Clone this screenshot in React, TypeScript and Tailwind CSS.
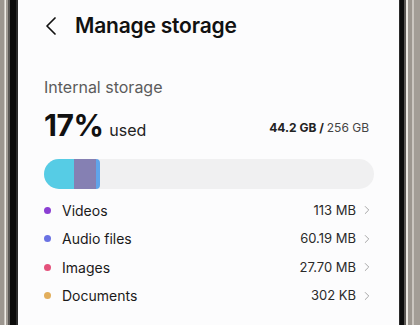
import { ChevronLeft, ChevronRight } from "lucide-react";

type Item = {
  label: string;
  size: string;
  dot: string;
};

const items: Item[] = [
  { label: "Videos", size: "113 MB", dot: "bg-[#8b3fd3]" },
  { label: "Audio files", size: "60.19 MB", dot: "bg-[#6a72e3]" },
  { label: "Images", size: "27.70 MB", dot: "bg-[#e4527c]" },
  { label: "Documents", size: "302 KB", dot: "bg-[#e2ae5c]" },
];

const LeftBezel = () => (
  <div className="flex h-full shrink-0">
    <div className="w-[4px] bg-[#9c968f]" />
    <div className="w-[1px] bg-[#cbc6c0]" />
    <div className="w-[1px] bg-[#efece6]" />
    <div className="w-[2px] bg-[#a19b94]" />
    <div className="w-[2px] bg-[#5a5754]" />
    <div className="w-[6px] bg-[#0b0b0b]" />
    <div className="w-[2px] bg-[#2a2a2a]" />
  </div>
);

const RightBezel = () => (
  <div className="flex h-full shrink-0">
    <div className="w-[1px] bg-[#2a2a2a]" />
    <div className="w-[4px] bg-[#0b0b0b]" />
    <div className="w-[2px] bg-[#5a5754]" />
    <div className="w-[2px] bg-[#ebe8e2]" />
    <div className="w-[4px] bg-[#9c968f]" />
    <div className="w-[2px] bg-[#cbc6c0]" />
    <div className="w-[6px] bg-[#a39d96]" />
  </div>
);

const App = () => {
  return (
    <div className="flex h-[325px] w-[420px] overflow-hidden bg-[#fcfcfd] font-['Inter',sans-serif]">
      <LeftBezel />
      <div className="flex flex-1 flex-col bg-[#fcfcfd] pl-[26px] pr-[25px]">
        <div className="mt-[12px] flex h-[28px] items-center">
          <ChevronLeft className="-ml-[9px] h-[32px] w-[32px] text-[#111]" strokeWidth={1.3} />
          <h1 className="ml-[8px] text-[21px] font-semibold tracking-[-0.2px] text-[#111]">
            Manage storage
          </h1>
        </div>

        <p className="mt-[37px] text-[16px] leading-[20px] text-[#5b5b5b]">Internal storage</p>

        <div className="mt-[11px] flex items-end justify-between">
          <div className="flex items-baseline">
            <span className="text-[30px] font-bold leading-[34px] tracking-[-0.5px] text-[#111]">
              17%
            </span>
            <span className="ml-[6px] text-[16px] text-[#222]">used</span>
          </div>
          <div className="mb-[5px] mr-[5px] text-[12px] text-[#222]">
            <span className="font-bold">44.2 GB / </span>
            <span className="text-[#444]">256 GB</span>
          </div>
        </div>

        <div className="mt-[17px] flex h-[30px] overflow-hidden rounded-full bg-[#f0f0f1]">
          <div className="w-[30px] bg-[#56cce5]" />
          <div className="w-[22px] bg-[#8580b3]" />
          <div className="w-[4px] rounded-r-full bg-[#60a4ea]" />
        </div>

        <ul className="mt-[7px] flex flex-col">
          {items.map((item) => (
            <li key={item.label} className="flex h-[28.5px] items-center">
              <span className={`h-[7px] w-[7px] rounded-full ${item.dot}`} />
              <span className="ml-[11px] text-[14px] text-[#1a1a1a]">{item.label}</span>
              <span className="ml-auto text-[13px] text-[#2a2a2a]">{item.size}</span>
              <ChevronRight className="ml-[4px] h-[14px] w-[14px] text-[#9a9a9a]" strokeWidth={1.5} />
            </li>
          ))}
        </ul>
      </div>
      <RightBezel />
    </div>
  );
};

export default App;
